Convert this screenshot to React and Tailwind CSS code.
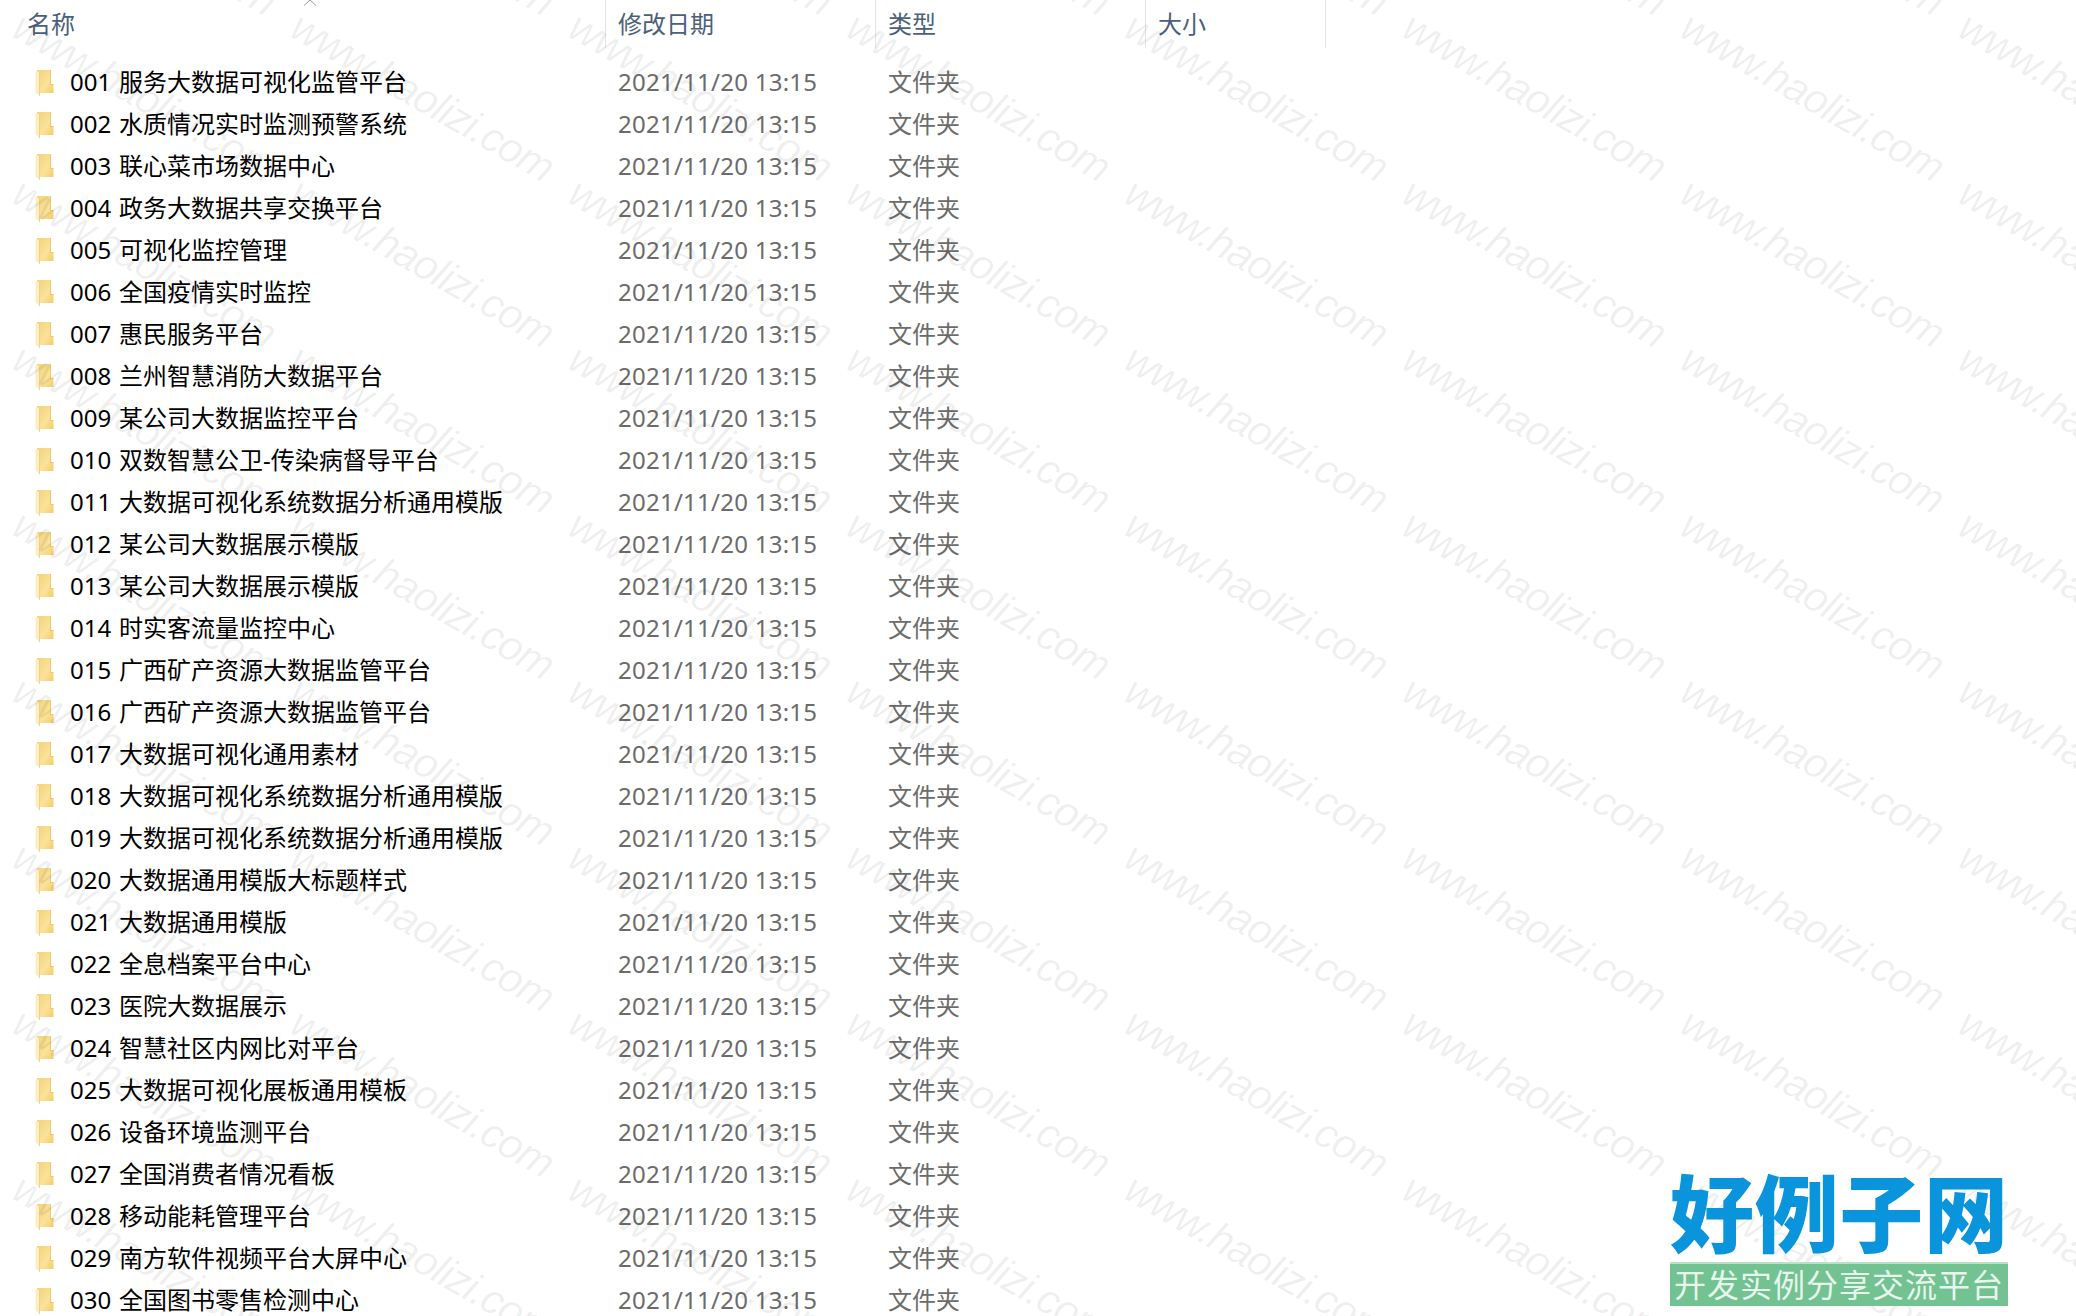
import React from "react";

const FONT = "font-['Noto_Sans','Noto_Sans_CJK_SC',sans-serif]";

const names = [
  "001 服务大数据可视化监管平台",
  "002 水质情况实时监测预警系统",
  "003 联心菜市场数据中心",
  "004 政务大数据共享交换平台",
  "005 可视化监控管理",
  "006 全国疫情实时监控",
  "007 惠民服务平台",
  "008 兰州智慧消防大数据平台",
  "009 某公司大数据监控平台",
  "010 双数智慧公卫-传染病督导平台",
  "011 大数据可视化系统数据分析通用模版",
  "012 某公司大数据展示模版",
  "013 某公司大数据展示模版",
  "014 时实客流量监控中心",
  "015 广西矿产资源大数据监管平台",
  "016 广西矿产资源大数据监管平台",
  "017 大数据可视化通用素材",
  "018 大数据可视化系统数据分析通用模版",
  "019 大数据可视化系统数据分析通用模版",
  "020 大数据通用模版大标题样式",
  "021 大数据通用模版",
  "022 全息档案平台中心",
  "023 医院大数据展示",
  "024 智慧社区内网比对平台",
  "025 大数据可视化展板通用模板",
  "026 设备环境监测平台",
  "027 全国消费者情况看板",
  "028 移动能耗管理平台",
  "029 南方软件视频平台大屏中心",
  "030 全国图书零售检测中心",
];

function FolderIcon({ id }) {
  return (
    <svg width="19" height="27" viewBox="0 0 19 27" className="shrink-0">
      <defs>
        <linearGradient id={id} x1="0" y1="0" x2="1" y2="1">
          <stop offset="0" stopColor="#f5d277" />
          <stop offset="0.6" stopColor="#fae29a" />
          <stop offset="1" stopColor="#f4cc68" />
        </linearGradient>
      </defs>
      <path d="M2 1 H16 V15 H18.5 V24 H2 Z" fill={`url(#${id})`} />
      <path d="M16 1 V15 H18.5 V16 H15 V1 Z" fill="#f0c969" />
      <path d="M0.5 2 L4.5 3 V27 L0.5 23.5 Z" fill="#fceec4" />
      <path d="M4.5 3 V27" stroke="#eeca80" strokeWidth="0.8" fill="none" />
    </svg>
  );
}

function Watermarks() {
  const items = [];
  for (let r = -1; r < 9; r++) {
    for (let c = -1; c < 8; c++) {
      items.push(
        <span
          key={`${r}-${c}`}
          className="absolute origin-top-left rotate-[30deg] whitespace-nowrap font-['Liberation_Sans',sans-serif] text-[42px] leading-none tracking-[-1px] italic text-black/[0.065]"
          style={{ left: 27 + c * 278, top: 5 + r * 166 }}
        >
          www.haolizi.com
        </span>
      );
    }
  }
  return <div className="pointer-events-none absolute inset-0 overflow-hidden">{items}</div>;
}

export default function App() {
  return (
    <div className={`relative h-[1316px] w-[2076px] overflow-hidden bg-white ${FONT} text-[24px] leading-none`}>
      <div className="flex h-12 text-[#4c607a]">
        <div className="flex w-[605px] items-center pl-[27px]">名称</div>
        <div className="flex w-[270px] items-center border-l border-[#e5e5e5] pl-[12px]">修改日期</div>
        <div className="flex w-[270px] items-center border-l border-[#e5e5e5] pl-[12px]">类型</div>
        <div className="flex w-[181px] items-center border-x border-[#e5e5e5] pl-[12px]">大小</div>
      </div>
      <div className="mt-[13px] flex flex-col">
        {names.map((n, i) => (
          <div key={n} className="flex h-[42px] items-center">
            <div className="flex w-[605px] items-center pl-[35px]">
              <FolderIcon id={`f${i}`} />
              <span className="ml-[16px] whitespace-nowrap text-black [word-spacing:1.5px]">{n}</span>
            </div>
            <div className="w-[270px] whitespace-nowrap pl-[13px] tracking-[0.25px] text-[#6b6b6b]">2021/11/20 13:15</div>
            <div className="w-[270px] pl-[13px] text-[#6b6b6b]">文件夹</div>
          </div>
        ))}
      </div>
      <svg width="14" height="6" viewBox="0 0 14 6" className="absolute left-[303px] top-0">
        <path d="M1 5.5 L7 0 L13 5.5" fill="none" stroke="#9a9a9a" strokeWidth="1" />
      </svg>
      <Watermarks />
      <div className="absolute left-[1670px] top-[1166px] w-[338px]">
        <div className="flex h-[96px] items-center justify-between text-[84px] leading-none font-black text-[#0a94dc]">
          <span>好</span><span>例</span><span>子</span><span>网</span>
        </div>
        <div className="flex h-[44px] items-center justify-center border-t-2 border-[#b9e0c9] bg-[#72c292] text-[32px] leading-none tracking-[1px] text-[#e8f5ed]">
          开发实例分享交流平台
        </div>
      </div>
    </div>
  );
}
